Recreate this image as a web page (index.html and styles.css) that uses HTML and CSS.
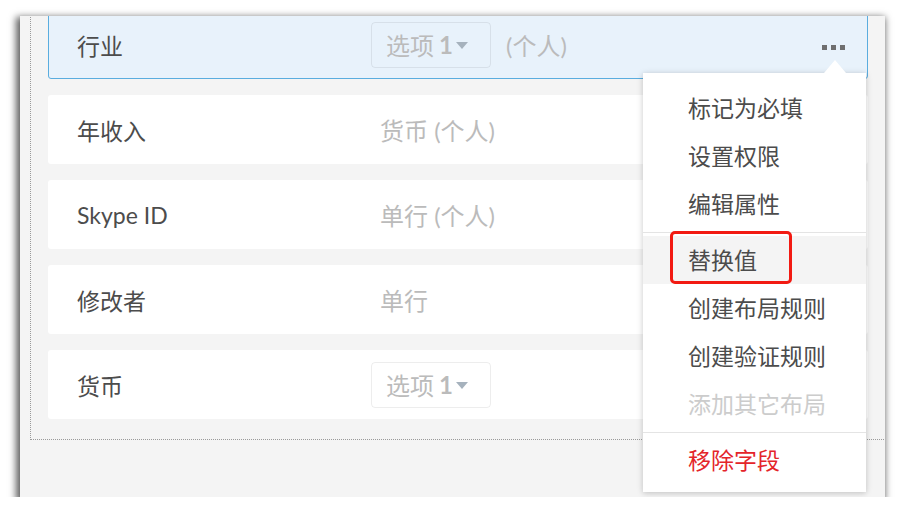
FILE: index.html
```html
<!DOCTYPE html>
<html lang="zh">
<head>
<meta charset="utf-8">
<title>字段</title>
<link rel="stylesheet" href="styles.css">
</head>
<body>
<div class="frame">
  <div class="canvas">
    <div class="row row-active">
      <div class="label">行业</div>
      <div class="type">
        <span class="select">选项 <b>1</b><span class="caret"></span></span>
        <span class="suffix">(个人)</span>
      </div>
      <div class="dots"><i></i><i></i><i></i></div>
    </div>
    <div class="row">
      <div class="label">年收入</div>
      <div class="type"><span class="plain">货币 (个人)</span></div>
    </div>
    <div class="row">
      <div class="label">Skype ID</div>
      <div class="type"><span class="plain">单行 (个人)</span></div>
    </div>
    <div class="row">
      <div class="label">修改者</div>
      <div class="type"><span class="plain">单行</span></div>
    </div>
    <div class="row">
      <div class="label">货币</div>
      <div class="type">
        <span class="select">选项 <b>1</b><span class="caret"></span></span>
      </div>
    </div>
  </div>

  <div class="menu">
    <span class="arrow"></span>
    <div class="item">标记为必填</div>
    <div class="item">设置权限</div>
    <div class="item">编辑属性</div>
    <div class="divider"></div>
    <div class="item hover">替换值</div>
    <div class="item">创建布局规则</div>
    <div class="item">创建验证规则</div>
    <div class="item disabled">添加其它布局</div>
    <div class="divider"></div>
    <div class="item danger">移除字段</div>
  </div>

  <div class="mark"></div>
</div>
</body>
</html>
```

FILE: styles.css
```css
* { box-sizing: border-box; }

body {
  margin: 0;
  background: #ffffff;
  font-family: Lato, "Noto Sans CJK SC", sans-serif;
}

.frame {
  position: relative;
  margin: 16px 0 0 20px;
  width: 865px;
  height: 481px;
  overflow: hidden;
  background: #f4f4f4;
  box-shadow: -2px 3px 7px 2px rgba(0, 0, 0, 0.62);
}

.canvas {
  margin: -20px 0 0 10px;
  width: 900px;
  padding: 14px 0 20px 17px;
  border-left: 1px dotted #9a9a9a;
  border-bottom: 1px dotted #9a9a9a;
}

.row {
  display: flex;
  align-items: center;
  width: 820px;
  height: 69px;
  margin-bottom: 16px;
  padding: 0 22px 0 28px;
  background: #ffffff;
  border: 1px solid transparent;
  border-radius: 3px;
}
.row:last-child { margin-bottom: 0; }

.row-active {
  background: #e8f2fb;
  border-color: #5aaddf;
}

.label {
  width: 294px;
  font-size: 23px;
  color: #4c4c4c;
}

.type {
  flex: 1;
  display: flex;
  align-items: center;
  font-size: 24px;
  color: #bbbbbb;
}

.plain { margin-left: 9px; }

.select {
  display: inline-flex;
  align-items: center;
  width: 120px;
  height: 46px;
  padding-left: 14px;
  border: 1px solid rgba(0, 0, 0, 0.07);
  border-radius: 4px;
}
.select b { margin-left: 5px; font-weight: 700; }

.caret {
  margin-left: 3px;
  margin-top: 2px;
  width: 0;
  height: 0;
  border-left: 6px solid transparent;
  border-right: 6px solid transparent;
  border-top: 7px solid #a6b2bd;
}

.suffix { margin-left: 15px; }

.dots {
  display: flex;
  gap: 4px;
  margin-top: 5px;
}
.dots i {
  width: 5px;
  height: 5px;
  background: #6f6f6f;
}

.menu {
  position: absolute;
  left: 623px;
  top: 57px;
  width: 223px;
  height: 419px;
  padding: 11px 0 7px;
  background: #ffffff;
  box-shadow: 0 1px 6px rgba(0, 0, 0, 0.22);
}

.arrow {
  position: absolute;
  left: 181px;
  top: -13px;
  width: 0;
  height: 0;
  border-left: 11px solid transparent;
  border-right: 11px solid transparent;
  border-bottom: 13px solid #ffffff;
}

.item {
  height: 48px;
  line-height: 48px;
  padding-left: 45px;
  font-size: 23px;
  color: #4c4c4c;
  white-space: nowrap;
}
.item.hover { background: #f4f4f4; }
.item.disabled { color: #cccccc; }
.item.danger { color: #e4252a; }

.divider {
  height: 1px;
  margin: 4px 0 3px;
  background: #e4e4e4;
}
.divider + .item.danger { margin-top: 1px; }

.mark {
  position: absolute;
  left: 650px;
  top: 215px;
  width: 122px;
  height: 53px;
  border: 3px solid #f21a12;
  border-radius: 5px;
}
```
